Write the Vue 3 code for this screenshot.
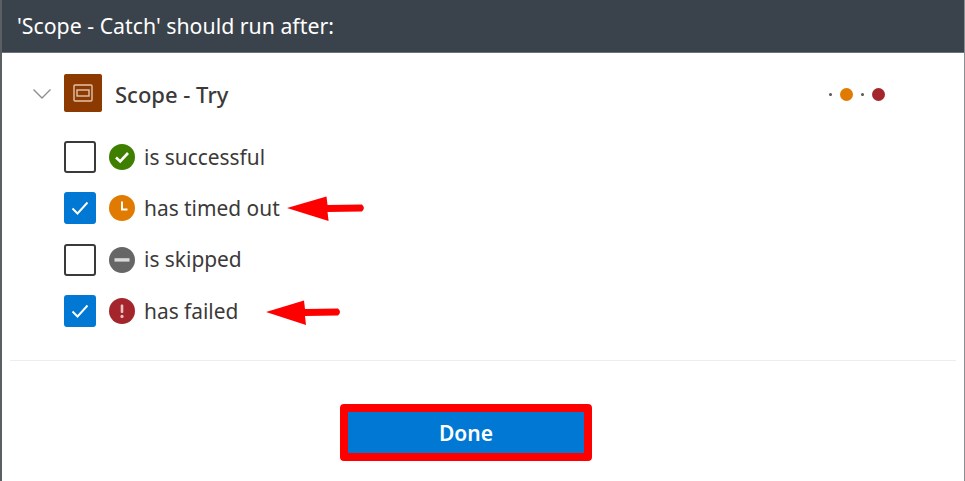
<script setup>
const rows = [
  { text: 'is successful', kind: 'ok', checked: false },
  { text: 'has timed out', kind: 'time', checked: true, arrow: 'a1' },
  { text: 'is skipped', kind: 'skip', checked: false },
  { text: 'has failed', kind: 'fail', checked: true, arrow: 'a2' },
]
</script>

<template>
  <div class="dialog">
    <header class="head">'Scope - Catch' should run after:</header>
    <section class="body">
      <div class="scope">
        <svg class="chev" width="20" height="12" viewBox="0 0 20 12"><path d="M1.5 1.5 10 10l8.5-8.5" fill="none" stroke="#8a8f94" stroke-width="1.4"/></svg>
        <span class="tile">
          <svg width="20" height="18" viewBox="0 0 20 18"><rect x="1" y="1" width="18" height="16" rx="1" fill="none" stroke="#e3c3ae" stroke-width="1.4"/><rect x="4" y="6" width="12" height="6" fill="none" stroke="#e3c3ae" stroke-width="1.4"/></svg>
        </span>
        <span class="title">Scope - Try</span>
        <span class="dots">
          <i class="pip"></i><i class="dot orange"></i><i class="pip"></i><i class="dot red"></i>
        </span>
      </div>
      <ul class="list">
        <li v-for="r in rows" :key="r.text" class="row">
          <span class="box" :class="{ on: r.checked }">
            <svg v-if="r.checked" width="20" height="16" viewBox="0 0 20 16"><path d="M2.5 8.5 7.5 13.5 17.5 2.5" fill="none" stroke="#fff" stroke-width="1.9"/></svg>
          </span>
          <svg class="status" width="26" height="26" viewBox="0 0 26 26">
            <template v-if="r.kind === 'ok'">
              <circle cx="13" cy="13" r="13" fill="#3f7f00"/>
              <path d="M7 13.5 11.2 17.5 19 9" fill="none" stroke="#fff" stroke-width="2.6"/>
            </template>
            <template v-else-if="r.kind === 'time'">
              <circle cx="13" cy="13" r="13" fill="#e07a00"/>
              <path d="M13 6.5V14.5H18.5" fill="none" stroke="#fff" stroke-width="2"/>
            </template>
            <template v-else-if="r.kind === 'skip'">
              <circle cx="13" cy="13" r="13" fill="#666"/>
              <rect x="5.5" y="11.2" width="15" height="3.4" fill="#d9d9d9"/>
            </template>
            <template v-else>
              <circle cx="13" cy="13" r="13" fill="#a4262c"/>
              <rect x="11.7" y="6.5" width="2.6" height="8.5" rx="1" fill="#e8c4c6"/>
              <circle cx="13" cy="18.4" r="1.6" fill="#e8c4c6"/>
            </template>
          </svg>
          <span class="text">{{ r.text }}</span>
          <svg v-if="r.arrow" class="arrow" :class="r.arrow" viewBox="0 0 76 26" preserveAspectRatio="none">
            <path d="M0 12 38 0.5 39 9 72 8.5Q76 12 72 15.5L39 16 40 25Z" fill="#f00"/>
          </svg>
        </li>
      </ul>
    </section>
    <footer class="foot">
      <button class="done">Done</button>
    </footer>
  </div>
</template>

<style scoped>
.dialog {
  width: 965px;
  height: 481px;
  box-sizing: border-box;
  display: flex;
  flex-direction: column;
  background: #fff;
  border-left: 2px solid #5a5f64;
  border-right: 1px solid #8a8d90;
  font-family: "Noto Sans", "Open Sans", sans-serif;
  color: #323130;
  overflow: hidden;
}
.head {
  height: 53px;
  margin: 0 -1px 0 -2px;
  padding-left: 17px;
  box-sizing: border-box;
  flex: none;
  background: #3a434b;
  border-bottom: 1px solid #6b7176;
  color: #fff;
  font-size: 21.3px;
  line-height: 52px;
}
.body {
  flex: none;
  height: 308px;
  margin: 0 8px;
  box-sizing: border-box;
  border-bottom: 1px solid #ededed;
  padding: 21px 0 0 20px;
}
.scope {
  display: flex;
  align-items: center;
  height: 38px;
}
.chev { margin: 2px 12px 0 2px; flex: none; }
.tile {
  width: 38px;
  height: 38px;
  flex: none;
  background: #8c3a00;
  border-radius: 2px;
  display: flex;
  align-items: center;
  justify-content: center;
}
.title {
  margin: 2px 0 0 13px;
  font-size: 22px;
  font-weight: 500;
  color: #3b3a39;
}
.dots {
  margin: 3px 71px 0 auto;
  display: flex;
  align-items: center;
  gap: 8px;
}
.pip { width: 3px; height: 3px; border-radius: 50%; background: #555; }
.dot { width: 13px; height: 13px; border-radius: 50%; }
.orange { background: #e07a00; }
.red { background: #a4262c; }
.list {
  list-style: none;
  margin: 29px 0 0;
  padding: 0 0 0 34px;
  display: flex;
  flex-direction: column;
  gap: 19.4px;
}
.row {
  position: relative;
  display: flex;
  align-items: center;
  height: 32px;
}
.box {
  width: 32px;
  height: 32px;
  box-sizing: border-box;
  border: 2px solid #3b3a39;
  border-radius: 3px;
  display: flex;
  align-items: center;
  justify-content: center;
  flex: none;
  background: #fff;
}
.box.on { background: #0078d4; border-color: #0078d4; }
.status { margin-left: 13px; flex: none; }
.text {
  margin: -1px 0 0 9px;
  font-size: 20.9px;
  color: #3b3a39;
}
.arrow { position: absolute; top: 4px; height: 26px; }
.a1 { left: 223px; width: 79px; }
.a2 { left: 202px; width: 76px; top: 5px; }
.foot {
  flex: 1;
  display: flex;
  justify-content: center;
  padding: 43px 34px 0 0;
}
.done {
  width: 252px;
  height: 57px;
  box-sizing: border-box;
  background: #0078d4;
  border: 8px solid #f00;
  border-radius: 4px;
  color: #fff;
  font: 600 21px "Noto Sans", "Open Sans", sans-serif;
  padding: 0;
}
</style>
